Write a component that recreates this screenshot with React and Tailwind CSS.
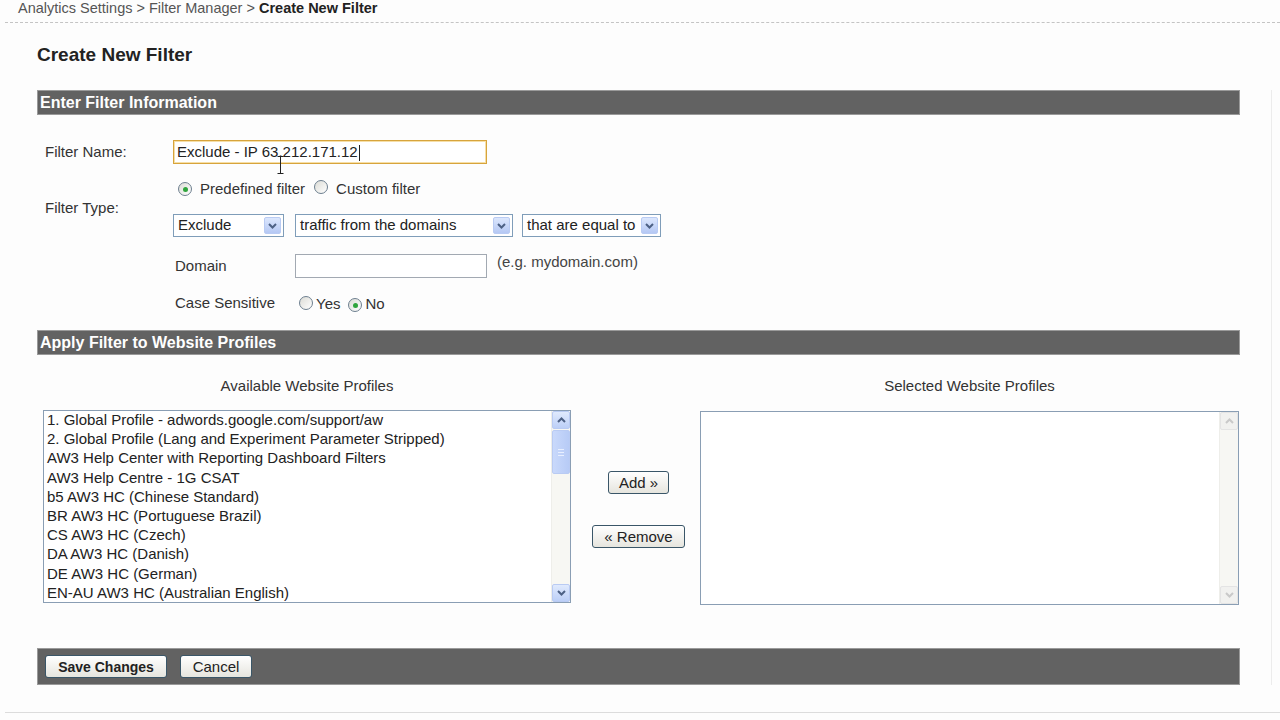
import React from "react";

const profiles = [
  "1. Global Profile - adwords.google.com/support/aw",
  "2. Global Profile (Lang and Experiment Parameter Stripped)",
  "AW3 Help Center with Reporting Dashboard Filters",
  "AW3 Help Centre - 1G CSAT",
  "b5 AW3 HC (Chinese Standard)",
  "BR AW3 HC (Portuguese Brazil)",
  "CS AW3 HC (Czech)",
  "DA AW3 HC (Danish)",
  "DE AW3 HC (German)",
  "EN-AU AW3 HC (Australian English)",
];

const Chevron = ({ up, color = "#4d6185" }) => (
  <svg width="9" height="6" viewBox="0 0 9 6">
    <path
      d={up ? "M1 5 L4.5 1.5 L8 5" : "M1 1 L4.5 4.5 L8 1"}
      fill="none"
      stroke={color}
      strokeWidth="2"
    />
  </svg>
);

const Select = ({ label, width }) => (
  <div
    className={`flex items-center h-[23px] border border-[#7f9db9] bg-white ${width}`}
  >
    <span className="flex-1 pl-[4px] truncate text-[#222]">{label}</span>
    <span className="mr-[2px] w-[17px] h-[17px] flex items-center justify-center rounded-[2px] border border-[#b9cbf3] bg-gradient-to-b from-[#dce7fd] to-[#b5c8f4]">
      <Chevron />
    </span>
  </div>
);

const Radio = ({ checked }) => (
  <span className="inline-flex items-center justify-center w-[14px] h-[14px] rounded-full border border-[#6d7f8f] bg-gradient-to-br from-[#dcdcd6] to-white">
    {checked && <span className="w-[5px] h-[5px] rounded-full bg-[#2fa43c]" />}
  </span>
);

const Button = ({ children, className = "" }) => (
  <button
    className={`h-[23px] rounded-[3px] border border-[#3a5668] bg-gradient-to-b from-white to-[#e6e5de] text-[15px] text-[#222] leading-none px-[6px] ${className}`}
  >
    {children}
  </button>
);

const Bar = ({ children }) => (
  <div className="h-[25px] bg-[#626262] border border-[#9a9a9a] pl-[2px] text-white font-bold text-[16px] leading-[23px]">
    {children}
  </div>
);

const Scrollbar = ({ disabled }) => (
  <div className="w-[19px] flex flex-col bg-[#f7f7f3] border-l border-[#eeeeea]">
    <div
      className={`h-[18px] flex items-center justify-center rounded-[2px] border ${
        disabled
          ? "border-[#e4e4e4] bg-[#f1f1ef]"
          : "border-[#b9cbf3] bg-gradient-to-b from-[#e0eafd] to-[#bccff7]"
      }`}
    >
      <Chevron up color={disabled ? "#c9c9c9" : "#4d6185"} />
    </div>
    {!disabled && (
      <div className="mt-[1px] h-[44px] rounded-[2px] border border-[#b9cbf3] bg-gradient-to-r from-[#c9d9fb] to-[#b7cbf6] flex flex-col items-center justify-center gap-[2px]">
        <span className="w-[6px] h-[1px] bg-[#e8efff]" />
        <span className="w-[6px] h-[1px] bg-[#e8efff]" />
        <span className="w-[6px] h-[1px] bg-[#e8efff]" />
      </div>
    )}
    <div className="flex-1" />
    <div
      className={`h-[18px] flex items-center justify-center rounded-[2px] border ${
        disabled
          ? "border-[#e4e4e4] bg-[#f1f1ef]"
          : "border-[#b9cbf3] bg-gradient-to-b from-[#e0eafd] to-[#bccff7]"
      }`}
    >
      <Chevron color={disabled ? "#c9c9c9" : "#4d6185"} />
    </div>
  </div>
);

export default function App() {
  return (
    <div className="w-[1280px] h-[720px] overflow-hidden bg-[#fdfdfd] text-[15px] text-[#333] font-['Liberation_Sans',Arial,sans-serif]">
      {/* breadcrumb */}
      <div className="ml-[5px] h-[23px] pl-[13px] border-b border-dashed border-[#c4c4c4] leading-[16px] text-[14.5px] text-[#555]">
        Analytics Settings &gt; Filter Manager &gt;{" "}
        <span className="font-bold text-[#222]">Create New Filter</span>
      </div>

      <div className="ml-[37px] mt-[21px] text-[19px] leading-[22px] font-bold text-[#222]">
        Create New Filter
      </div>

      <div className="mt-[24px] w-[1272px] pl-[37px] pr-[31px] border-r border-[#ececec]">
        <Bar>Enter Filter Information</Bar>

        <div className="pl-[8px]">
          {/* filter name */}
          <div className="mt-[25px] flex items-center h-[24px]">
            <span className="w-[128px] text-[#333]">Filter Name:</span>
            <div className="relative w-[314px] h-[24px] border border-[#d7a43c] bg-white shadow-[inset_0_0_0_1px_#f6dfa8] pl-[3px] leading-[22px] text-[#222]">
              Exclude - IP 63.212.171.12
              <span className="inline-block align-middle w-[1px] h-[16px] bg-[#222] ml-[1px]" />
              <svg
                className="absolute left-[103px] top-[15px]"
                width="7"
                height="18"
                viewBox="0 0 7 18"
              >
                <path
                  d="M0.5 0.5 H6.5 M3.5 0.5 V17.5 M0.5 17.5 H6.5"
                  fill="none"
                  stroke="#222"
                  strokeWidth="1"
                />
              </svg>
            </div>
          </div>

          {/* filter type */}
          <div className="flex items-center mt-[15px]">
            <span className="w-[128px] text-[#333]">Filter Type:</span>
            <div className="flex flex-col">
              <div className="h-[20px] flex items-center pl-[5px] text-[#333]">
                <Radio checked />
                <span className="ml-[8px]">Predefined filter</span>
                <span className="ml-[9px]">
                  <Radio />
                </span>
                <span className="ml-[8px]">Custom filter</span>
              </div>
              <div className="mt-[15px] flex items-center">
                <Select label="Exclude" width="w-[111px]" />
                <div className="ml-[11px]">
                  <Select label="traffic from the domains" width="w-[218px]" />
                </div>
                <div className="ml-[9px]">
                  <Select label="that are equal to" width="w-[139px]" />
                </div>
              </div>
            </div>
          </div>

          {/* domain */}
          <div className="mt-[17px] flex items-center h-[24px] pl-[130px]">
            <span className="w-[120px] text-[#333]">Domain</span>
            <div className="w-[192px] h-[24px] border border-[#a2a9b2] bg-white" />
            <span className="ml-[10px] -mt-[8px] text-[#444]">(e.g. mydomain.com)</span>
          </div>

          {/* case sensitive */}
          <div className="mt-[15px] flex items-center h-[20px] pl-[130px]">
            <span className="w-[124px] text-[#333]">Case Sensitive</span>
            <Radio />
            <span className="ml-[3px] mt-[3px]">Yes</span>
            <span className="ml-[8px]">
              <Radio checked />
            </span>
            <span className="ml-[3px] mt-[3px]">No</span>
          </div>
        </div>

        <div className="mt-[17px]">
          <Bar>Apply Filter to Website Profiles</Bar>
        </div>

        <div className="pl-[6px] grid grid-cols-[528px_129px_539px]">
          <div className="mt-[21px] h-[20px] leading-[20px] text-center text-[#333]">
            Available Website Profiles
          </div>
          <div />
          <div className="mt-[21px] h-[20px] leading-[20px] text-center text-[#333]">
            Selected Website Profiles
          </div>

          <div className="mt-[14px] h-[193px] flex border border-[#8a9eb4] bg-white">
            <div className="flex-1 pl-[3px] -mt-[1px] leading-[19.2px] text-[#222] whitespace-nowrap overflow-hidden">
              {profiles.map((p) => (
                <div key={p}>{p}</div>
              ))}
            </div>
            <Scrollbar />
          </div>

          <div className="mt-[14px] flex flex-col items-center pl-[6px]">
            <Button className="mt-[61px] w-[61px]">Add »</Button>
            <Button className="mt-[31px] w-[93px]">« Remove</Button>
          </div>

          <div className="mt-[15px] h-[194px] flex border border-[#8a9eb4] bg-white">
            <div className="flex-1" />
            <Scrollbar disabled />
          </div>
        </div>

        <div className="mt-[43px] h-[37px] bg-[#626262] border border-[#9a9a9a] pl-[7px] flex items-center gap-[13px]">
          <Button className="w-[122px] font-bold !text-[14px]">Save Changes</Button>
          <Button className="w-[72px]">Cancel</Button>
        </div>
      </div>

      <div className="mt-[27px] ml-[5px] border-t border-[#dcdcdc]" />
    </div>
  );
}
